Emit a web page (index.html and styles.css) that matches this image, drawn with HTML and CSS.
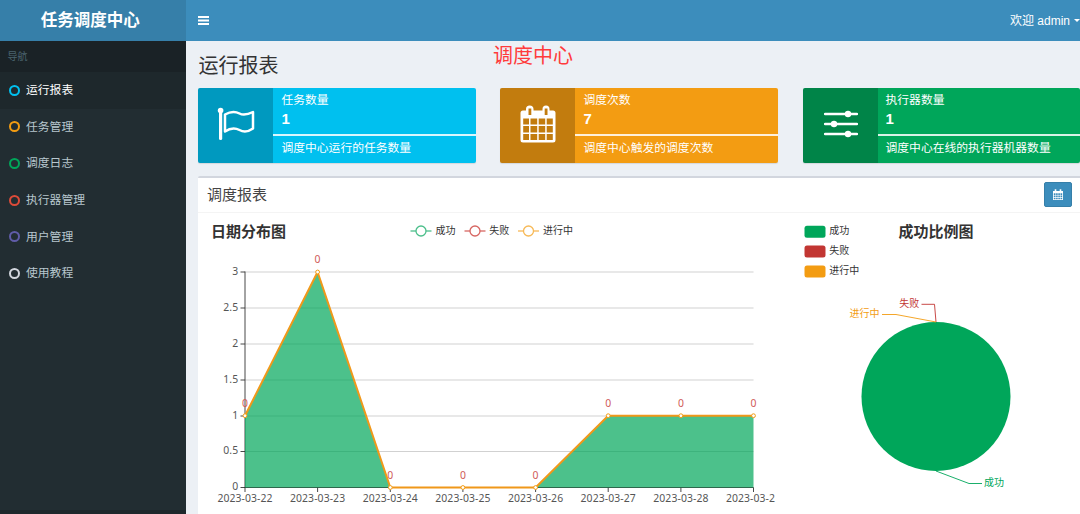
FILE: index.html
```html
<!DOCTYPE html>
<html lang="zh-CN">
<head>
    <meta charset="UTF-8">
    <meta name="viewport" content="width=device-width, initial-scale=1.0">
    <title>任务调度中心</title>
    <link rel="stylesheet" href="styles.css">
</head>
<body>
    <header class="main-header">
        <a class="logo">任务调度中心</a>
        <nav class="navbar">
            <svg class="toggle" viewBox="0 0 11 9"><path d="M0 1h11M0 4.5h11M0 8h11"/></svg>
            <div class="user">欢迎 admin <span class="caret"></span></div>
        </nav>
    </header>

    <div class="wrapper">
        <aside class="sidebar">
            <div class="nav-header">导航</div>
            <ul class="menu">
                <li class="active"><i class="ring aqua"></i><span>运行报表</span></li>
                <li><i class="ring yellow"></i><span>任务管理</span></li>
                <li><i class="ring green"></i><span>调度日志</span></li>
                <li><i class="ring red"></i><span>执行器管理</span></li>
                <li><i class="ring purple"></i><span>用户管理</span></li>
                <li><i class="ring gray"></i><span>使用教程</span></li>
            </ul>
        </aside>

        <main class="content">
            <h1>运行报表</h1>
            <div class="note">调度中心</div>

            <div class="info-row">
                <div class="info-box bg-aqua">
                    <div class="info-icon">
                        <svg width="40" height="40" viewBox="0 0 40 40">
                            <circle cx="4.6" cy="6.5" r="2.8" fill="#fff"/>
                            <path d="M4.6 7v27.5" stroke="#fff" stroke-width="3.2" stroke-linecap="round"/>
                            <path d="M9 10.500C15 7 19 7 23.500 9.500C28 12 32 10.500 37 8V24.500C32 28 28 28.500 23.500 26C19 23.500 14 24 9 27.500Z" fill="none" stroke="#fff" stroke-width="2.5" stroke-linejoin="round"/>
                        </svg>
                    </div>
                    <div class="info-content">
                        <span class="info-text">任务数量</span>
                        <span class="info-number">1</span>
                        <div class="progress"></div>
                        <span class="info-text">调度中心运行的任务数量</span>
                    </div>
                </div>
                <div class="info-box bg-yellow">
                    <div class="info-icon">
                        <svg width="36" height="38" viewBox="0 0 36 38">
                            <path fill="#fff" fill-rule="evenodd" d="M3 5.500H6V4Q6 .5 9.700 .5T13.500 4V5.500H22.500V4Q22.500 .5 26 .5T29.500 4V5.500H33Q35.500 5.500 35.500 8V35Q35.500 37.500 33 37.500H3Q.5 37.500 .5 35V8Q.5 5.500 3 5.500ZM8.500 3.500V10H11.300V3.500ZM24.700 3.500V10H27.500V3.500ZM3.200 13.500V19.500H9V13.500ZM10.500 13.500V19.500H17.200V13.500ZM18.700 13.500V19.500H25.200V13.500ZM26.700 13.500V19.500H32.800V13.500ZM3.200 21V27.500H9V21ZM10.500 21V27.500H17.200V21ZM18.700 21V27.500H25.200V21ZM26.700 21V27.500H32.800V21ZM3.200 29V34.900H9V29ZM10.500 29V34.900H17.200V29ZM18.700 29V34.900H25.200V29ZM26.700 29V34.900H32.800V29Z"/>
                        </svg>
                    </div>
                    <div class="info-content">
                        <span class="info-text">调度次数</span>
                        <span class="info-number">7</span>
                        <div class="progress"></div>
                        <span class="info-text">调度中心触发的调度次数</span>
                    </div>
                </div>
                <div class="info-box bg-green">
                    <div class="info-icon">
                        <svg width="34" height="28" viewBox="0 0 34 28">
                            <path d="M1 4h32M1 14h32M1 24h32" stroke="#fff" stroke-width="2.4" stroke-linecap="round"/>
                            <g fill="#fff"><circle cx="24" cy="4" r="3.200"/><circle cx="10" cy="14" r="3.200"/><circle cx="24" cy="24" r="3.200"/></g>
                        </svg>
                    </div>
                    <div class="info-content">
                        <span class="info-text">执行器数量</span>
                        <span class="info-number">1</span>
                        <div class="progress"></div>
                        <span class="info-text">调度中心在线的执行器机器数量</span>
                    </div>
                </div>
            </div>

            <section class="box">
                <div class="box-header">
                    <h3>调度报表</h3>
                    <button class="date-btn">
                        <svg width="10" height="11" viewBox="0 0 10 11"><path fill="#fff" fill-rule="evenodd" d="M0 2H1.700V.3H3.300V2H6.700V.3H8.300V2H10V11H0ZM.8 4.300V5.900H2.500V4.300ZM3.100 4.300V5.900H4.700V4.300ZM5.300 4.300V5.900H6.900V4.300ZM7.500 4.300V5.900H9.200V4.300ZM.8 6.500V8.100H2.500V6.500ZM3.100 6.500V8.100H4.700V6.500ZM5.300 6.500V8.100H6.900V6.500ZM7.500 6.500V8.100H9.200V6.500ZM.8 8.700V10.200H2.500V8.700ZM3.100 8.700V10.200H4.700V8.700ZM5.300 8.700V10.200H6.900V8.700ZM7.500 8.700V10.200H9.200V8.700Z"/></svg>
                    </button>
                </div>
                <div class="charts">
                    <!-- line chart -->
                    <svg class="chart" width="580" height="301" viewBox="198 213 580 301">
                        <text class="chart-title" x="211" y="237.300">日期分布图</text>
                        <g class="legend-line">
                            <g stroke="#4cbf8b"><path d="M410.500 231h21"/><circle cx="421" cy="231" r="5"/></g>
                            <g stroke="#d76662"><path d="M464.500 231h21"/><circle cx="475" cy="231" r="5"/></g>
                            <g stroke="#f7b957"><path d="M518 231h21"/><circle cx="528.500" cy="231" r="5"/></g>
                        </g>
                        <g class="label">
                            <text x="435.500" y="234">成功</text>
                            <text x="489.300" y="234">失败</text>
                            <text x="543" y="234">进行中</text>
                        </g>
                        <path class="grid" d="M245 272H753.500M245 308H753.500M245 344H753.500M245 380H753.500M245 416H753.500M245 451.500H753.500"/>
                        <path class="axis" d="M245 271.500V488M240.500 272H245M240.500 308H245M240.500 344H245M240.500 380H245M240.500 416H245M240.500 451.500H245M240.500 487.500H753.500M245 487.500v4.500M317.600 487.500v4.500M390.300 487.500v4.500M462.900 487.500v4.500M535.600 487.500v4.500M608.200 487.500v4.500M680.900 487.500v4.500M753.500 487.500v4.500"/>
                        <g class="axis-label end">
                            <text x="238.300" y="274.500">3</text>
                            <text x="238.300" y="310.500">2.5</text>
                            <text x="238.300" y="346.500">2</text>
                            <text x="238.300" y="382.500">1.5</text>
                            <text x="238.300" y="418.500">1</text>
                            <text x="238.300" y="454">0.5</text>
                            <text x="238.300" y="490">0</text>
                        </g>
                        <g class="axis-label middle">
                            <text x="245" y="502">2023-03-22</text>
                            <text x="317.600" y="502">2023-03-23</text>
                            <text x="390.300" y="502">2023-03-24</text>
                            <text x="462.900" y="502">2023-03-25</text>
                            <text x="535.600" y="502">2023-03-26</text>
                            <text x="608.200" y="502">2023-03-27</text>
                            <text x="680.900" y="502">2023-03-28</text>
                            <text x="750.500" y="502">2023-03-2</text>
                        </g>
                        <g class="value middle">
                            <text x="245" y="407">0</text>
                            <text x="317.600" y="263">0</text>
                            <text x="390.300" y="479">0</text>
                            <text x="462.900" y="479">0</text>
                            <text x="535.600" y="479">0</text>
                            <text x="608.200" y="407">0</text>
                            <text x="680.900" y="407">0</text>
                            <text x="753.500" y="407">0</text>
                        </g>
                        <path class="area" d="M245 415.700L317.600 272L390.300 487.500H535.600L608.200 415.700H753.500V487.500H245Z"/>
                        <path class="line" d="M245 415.700L317.600 272L390.300 487.500H535.600L608.200 415.700H753.500"/>
                        <g class="dots">
                            <circle cx="245" cy="415.700" r="1.900"/>
                            <circle cx="317.600" cy="272" r="1.900"/>
                            <circle cx="390.300" cy="487.500" r="1.900"/>
                            <circle cx="462.900" cy="487.500" r="1.900"/>
                            <circle cx="535.600" cy="487.500" r="1.900"/>
                            <circle cx="608.200" cy="415.700" r="1.900"/>
                            <circle cx="680.900" cy="415.700" r="1.900"/>
                            <circle cx="753.500" cy="415.700" r="1.900"/>
                        </g>
                    </svg>

                    <!-- pie chart -->
                    <svg class="chart" width="290" height="301" viewBox="790 213 290 301">
                        <rect x="804.500" y="225.700" width="21" height="12" rx="2.500" fill="#00a65a"/>
                        <rect x="804.500" y="245.500" width="21" height="12" rx="2.500" fill="#c23632"/>
                        <rect x="804.500" y="265.500" width="21" height="12" rx="2.500" fill="#f39c12"/>
                        <g class="label">
                            <text x="829.300" y="234.300">成功</text>
                            <text x="829.300" y="254.300">失败</text>
                            <text x="829.300" y="274.300">进行中</text>
                        </g>
                        <text class="chart-title" x="898.500" y="237.300">成功比例图</text>
                        <circle cx="936" cy="396.500" r="74.500" fill="#00a65a"/>
                        <g class="leader">
                            <path stroke="#c23632" d="M936 322L934.500 304.300H921.500"/>
                            <path stroke="#f39c12" d="M936 322L896 314.500H882"/>
                            <path stroke="#00a65a" d="M936 471L969 483.500H982"/>
                        </g>
                        <g class="label">
                            <text class="t-red" x="899.300" y="307">失败</text>
                            <text class="t-yellow" x="849.500" y="317">进行中</text>
                            <text class="t-green" x="984" y="486">成功</text>
                        </g>
                    </svg>
                </div>
            </section>
        </main>
    </div>
</body>
</html>
```
FILE: styles.css
```css
* {
    box-sizing: border-box;
}
body {
    margin: 0;
    height: 514px;
    overflow: hidden;
    font-family: "Liberation Sans", "Noto Sans CJK SC", sans-serif;
    font-size: 11.8px;
    color: #333;
    background-color: #ecf0f5;
}
.main-header {
    display: flex;
    height: 41px;
    color: #fff;
}
.logo {
    width: 186.4px;
    background-color: #367fa9;
    text-align: center;
    font-size: 16.5px;
    font-weight: bold;
    line-height: 40px;
    padding-right: 6px;
}
.navbar {
    flex: 1;
    display: flex;
    align-items: center;
    justify-content: space-between;
    padding: 0 0 1px 12px;
    background-color: #3c8dbc;
}
.toggle {
    width: 11px;
    height: 9px;
    stroke: #fff;
    stroke-width: 1.9;
}
.user {
    display: flex;
    align-items: center;
    gap: 4px;
    white-space: nowrap;
    font-size: 12px;
    padding-bottom: 2px;
}
.caret {
    border-top: 3.5px solid #fff;
    border-left: 3.5px solid transparent;
    border-right: 3.5px solid transparent;
    margin-top: 3px;
}
.wrapper {
    display: flex;
    height: 473px;
}
.sidebar {
    width: 186.4px;
    flex: none;
    background-color: #222d32;
    border-bottom: 4px solid #1e272b;
}
.nav-header {
    height: 31px;
    line-height: 31px;
    padding-left: 7.5px;
    font-size: 10px;
    color: #4b646f;
    background-color: #1a2226;
}
.menu {
    list-style: none;
    margin: 0;
    padding: 0;
}
.menu li {
    display: flex;
    align-items: center;
    gap: 6px;
    height: 36.6px;
    padding-left: 9px;
    color: #b8c7ce;
}
.menu li span {
    padding-bottom: 3px;
}
.menu li.active {
    color: #fff;
    background-color: #1e282c;
}
.ring {
    width: 11px;
    height: 11px;
    border: 2px solid;
    border-radius: 50%;
}
.aqua { color: #00c0ef; }
.yellow { color: #f39c12; }
.green { color: #00a65a; }
.red { color: #dd4b39; }
.purple { color: #605ca8; }
.gray { color: #d2d6de; }

.content {
    flex: 1;
    min-width: 0;
    position: relative;
    padding: 12px 0 0 12px;
    overflow: hidden;
}
h1 {
    margin: 0;
    height: 35px;
    line-height: 26px;
    font-size: 20px;
    font-weight: normal;
}
.note {
    position: absolute;
    left: 306.5px;
    top: 3px;
    font-size: 20px;
    line-height: 24px;
    color: #ff3b3b;
}
.info-row {
    display: grid;
    grid-template-columns: repeat(3, 1fr);
    gap: 24.6px;
}
.info-box {
    display: flex;
    height: 75px;
    border-radius: 2px;
    overflow: hidden;
    color: #fff;
    box-shadow: 0 1px 1px rgba(0,0,0,0.1);
}
.bg-aqua { background-color: #00c0ef; }
.bg-yellow { background-color: #f39c12; }
.bg-green { background-color: #00a65a; }
.info-icon {
    width: 75px;
    display: flex;
    align-items: center;
    justify-content: center;
    padding: 0 0 4px 1px;
    background-color: rgba(0,0,0,0.2);
}
.info-content {
    flex: 1;
    padding: 4px 0 0 8px;
}
.info-text,
.info-number {
    display: block;
    line-height: 17px;
    white-space: nowrap;
}
.info-number {
    font-size: 15px;
    font-weight: bold;
    line-height: 20px;
}
.progress {
    height: 1.5px;
    margin: 5px 0 4px -8px;
    background-color: rgba(255,255,255,0.85);
}
.box {
    margin-top: 12.5px;
    height: 350px;
    border-top: 2.4px solid #d2d6de;
    border-radius: 2px 0 0 0;
    background-color: #fff;
}
.box-header {
    display: flex;
    align-items: center;
    justify-content: space-between;
    height: 35.5px;
    padding: 0 8px 0 8.5px;
    border-bottom: 1px solid #f4f4f4;
}
.box-header h3 {
    margin: 0;
    padding-bottom: 2px;
    font-size: 15px;
    font-weight: normal;
    color: #444;
}
.date-btn {
    display: flex;
    align-items: center;
    justify-content: center;
    width: 28px;
    height: 25px;
    padding: 0;
    border: 1px solid #367fa9;
    border-radius: 2px;
    background-color: #3c8dbc;
}
.charts {
    display: flex;
    justify-content: space-between;
}
.chart {
    display: block;
    font-family: "Noto Sans", "Noto Sans CJK SC", sans-serif;
}
.chart-title {
    font-family: "Noto Sans CJK SC", sans-serif;
    font-size: 15px;
    font-weight: bold;
    fill: #333;
}
.label {
    font-family: "Noto Sans CJK SC", sans-serif;
    font-size: 10px;
    fill: #333;
}
.legend-line {
    fill: #fff;
    stroke-width: 1.3;
}
.grid {
    stroke: #ccc;
    stroke-width: 0.9;
}
.axis {
    stroke: #333;
    stroke-width: 0.9;
}
.axis-label {
    font-size: 10.4px;
    letter-spacing: 0.1px;
    fill: #555;
}
.end { text-anchor: end; }
.middle { text-anchor: middle; }
.value {
    font-size: 10.4px;
    fill: #d05a57;
}
.area {
    fill: #00a65a;
    fill-opacity: 0.7;
}
.line {
    fill: none;
    stroke: #f0981a;
    stroke-width: 2;
    stroke-linejoin: bevel;
}
.dots {
    fill: #fff;
    stroke: #f39c12;
    stroke-width: 1;
}
.leader {
    fill: none;
    stroke-width: 0.9;
}
.t-red { fill: #c23632; }
.t-yellow { fill: #f39c12; }
.t-green { fill: #00a65a; }
```
